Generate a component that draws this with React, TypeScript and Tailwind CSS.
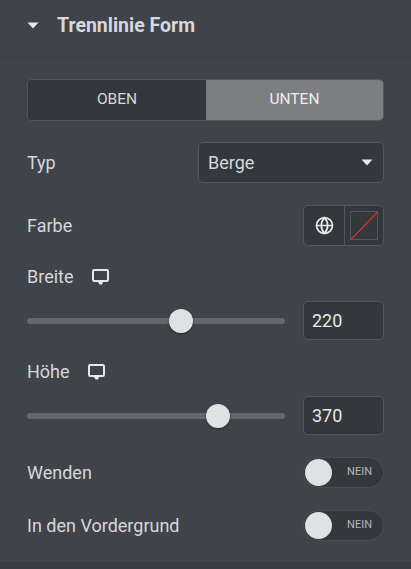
import { Globe } from "lucide-react";

function Caret({ className }: { className: string }) {
  return (
    <svg viewBox="0 0 12 7" className={className} fill="currentColor">
      <path d="M0.5 0.5h11L6 6.5z" />
    </svg>
  );
}

function DesktopIcon() {
  return (
    <svg viewBox="0 0 17 16" className="w-[17px] h-[16px] text-[#e6e8ea]" fill="none">
      <rect x="1" y="1" width="15" height="11" rx="1.2" stroke="currentColor" strokeWidth="2" />
      <path d="M6 13h5l-1 2.5H7.5z" fill="currentColor" />
    </svg>
  );
}

function Slider({ value, thumb, label, iconGap }: { value: string; thumb: number; label: string; iconGap: string }) {
  return (
    <div className="flex flex-col">
      <div className={`flex items-center h-[20px] ${iconGap}`}>
        <span className="text-[18px] leading-[20px] text-[#d5d8dc]">{label}</span>
        <DesktopIcon />
      </div>
      <div className="flex items-center justify-between mt-[14px]">
        <div className="relative w-[258px] h-[6px] rounded-full bg-[#63666a]">
          <div
            className="absolute top-1/2 w-[24px] h-[24px] -mt-[12px] -ml-[12px] rounded-full bg-[#e0e1e3] shadow-[0_1px_3px_rgba(0,0,0,0.4)]"
            style={{ left: thumb }}
          />
        </div>
        <div className="flex items-center w-[81px] h-[39px] pl-[8px] rounded-[5px] border border-[#54575b] bg-[#34373b] text-[18px] text-[#e6e8ea]">
          {value}
        </div>
      </div>
    </div>
  );
}

function SwitchRow({ label }: { label: string }) {
  return (
    <div className="flex items-center justify-between h-[31px]">
      <span className="text-[18px] text-[#d5d8dc]">{label}</span>
      <div className="flex items-center justify-between w-[81px] h-[31px] pl-[1px] pr-[11px] rounded-full border border-[#4a4d51] bg-[#34373b]">
        <div className="w-[27px] h-[27px] rounded-full bg-[#e0e1e3]" />
        <span className="text-[11px] text-[#b4b8bd]">NEIN</span>
      </div>
    </div>
  );
}

export default function App() {
  return (
    <div className="w-[411px] h-[569px] overflow-hidden flex flex-col bg-[#404349] font-['Roboto',sans-serif]">
      {/* header */}
      <div className="flex items-center h-[58px] shrink-0 pl-[27px] border-b border-[#3a3d42] pb-[6px]">
        <Caret className="w-[12px] h-[7px] text-[#e6e8ea]" />
        <span className="ml-[18px] text-[19.5px] font-bold text-[#d5d8dc]">Trennlinie Form</span>
      </div>

      <div className="flex flex-col flex-1 px-[27px] pt-[21px]">
        {/* oben / unten */}
        <div className="flex h-[42px] rounded-[5px] overflow-hidden border border-[#54575b] text-[15.5px]">
          <div className="flex items-center justify-center w-[178px] bg-[#34373b] text-[#d5d8dc]">OBEN</div>
          <div className="flex items-center justify-center flex-1 bg-[#7d7e82] text-[#eceef0]">UNTEN</div>
        </div>

        {/* typ */}
        <div className="flex items-center justify-between mt-[21px]">
          <span className="text-[18px] text-[#d5d8dc]">Typ</span>
          <div className="flex items-center justify-between w-[186px] h-[41px] pl-[9px] pr-[10px] rounded-[5px] border border-[#54575b] bg-[#34373b]">
            <span className="text-[18px] text-[#d5d8dc]">Berge</span>
            <Caret className="w-[12px] h-[7px] text-[#e6e8ea]" />
          </div>
        </div>

        {/* farbe */}
        <div className="flex items-center justify-between mt-[22px]">
          <span className="text-[18px] text-[#d5d8dc]">Farbe</span>
          <div className="flex w-[81px] h-[41px] rounded-[5px] overflow-hidden border border-[#54575b] bg-[#34373b]">
            <div className="flex items-center justify-center w-[41px] border-r border-[#54575b]">
              <Globe size={19} strokeWidth={2.2} className="text-[#e6e8ea]" />
            </div>
            <div className="flex items-center justify-center flex-1">
              <svg viewBox="0 0 28 29" className="w-[28px] h-[29px]" fill="none">
                <rect x="0.5" y="0.5" width="27" height="28" stroke="#54575b" />
                <path d="M1 28.5L27.5 1" stroke="#c8322f" strokeWidth="1.5" />
              </svg>
            </div>
          </div>
        </div>

        <div className="mt-[21px]">
          <Slider label="Breite" value="220" thumb={154} iconGap="gap-[18px]" />
        </div>
        <div className="mt-[22px]">
          <Slider label="Höhe" value="370" thumb={191} iconGap="gap-[18px]" />
        </div>

        <div className="mt-[22px]">
          <SwitchRow label="Wenden" />
        </div>
        <div className="mt-[22px]">
          <SwitchRow label="In den Vordergrund" />
        </div>
      </div>

      <div className="h-[7px] shrink-0 bg-[#393c41]" />
    </div>
  );
}
